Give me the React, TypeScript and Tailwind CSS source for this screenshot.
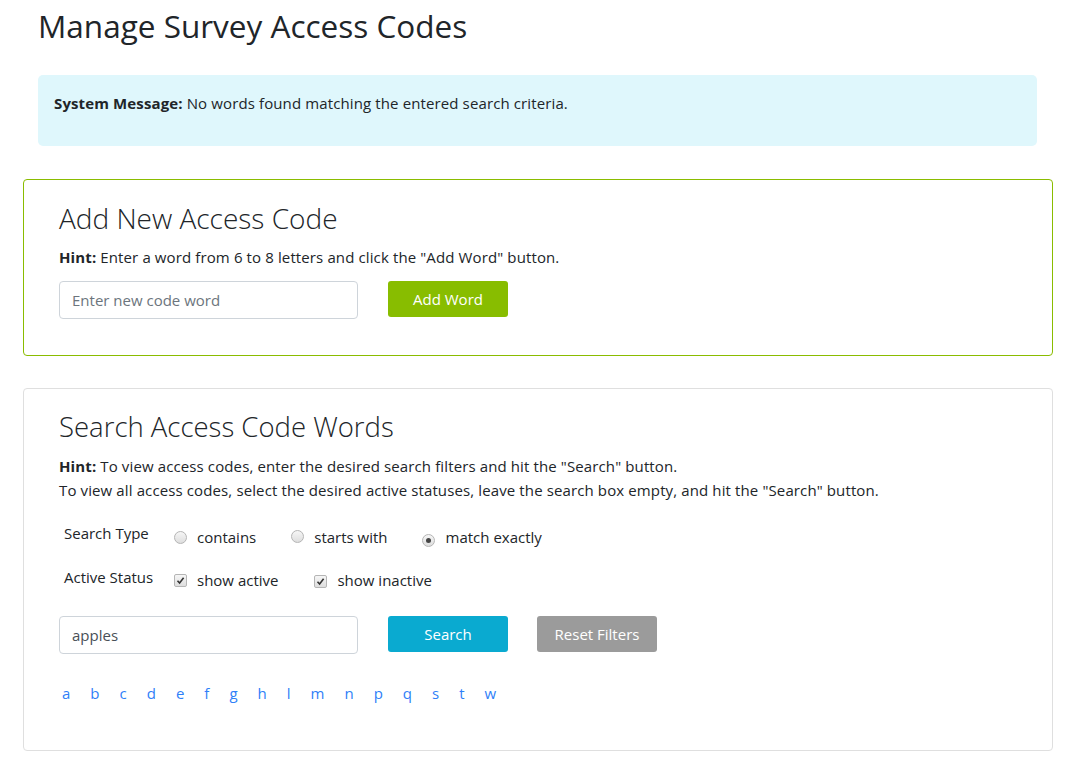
import React from "react";

function Radio({ checked }: { checked?: boolean }) {
  return (
    <span className="inline-flex items-center justify-center w-[13px] h-[13px] rounded-full border border-[#b5b5b5] bg-gradient-to-b from-[#f6f6f6] to-[#dedede]">
      {checked && <span className="w-[5px] h-[5px] rounded-full bg-[#444]" />}
    </span>
  );
}

function Check() {
  return (
    <span className="inline-flex items-center justify-center w-[13px] h-[13px] rounded-[2px] border border-[#b5b5b5] bg-gradient-to-b from-[#f6f6f6] to-[#dedede]">
      <svg width="9" height="9" viewBox="0 0 9 9">
        <path d="M1.5 4.8 L3.6 7 L7.6 1.8" fill="none" stroke="#333" strokeWidth="1.6" />
      </svg>
    </span>
  );
}

const letters = ["a", "b", "c", "d", "e", "f", "g", "h", "l", "m", "n", "p", "q", "s", "t", "w"];

export default function App() {
  return (
    <div className="w-[1076px] min-h-[768px] bg-white pl-[23px] text-[#212529] font-['Open_Sans',sans-serif] text-[15px]">
      <h1 className="ml-[15px] pt-[6px] text-[31.5px] leading-[40px] font-medium text-[#212529]">
        Manage Survey Access Codes
      </h1>
      <div className="ml-[15px] mt-[29px] w-[999px] h-[71px] bg-[#dff7fc] rounded-[5px] px-[16px] pt-[16px]">
        <p className="leading-[24px] tracking-[0.12px]">
          <b className="font-bold">System Message:</b> No words found matching the entered search criteria.
        </p>
      </div>

      <div className="mt-[33px] w-[1030px] h-[177px] border border-[#8abc00] rounded-[4px] pl-[35px] pt-[21px]">
        <h2 className="text-[28px] font-light leading-[34px]">Add New Access Code</h2>
        <p className="mt-[10px] leading-[24px] tracking-[0.12px]">
          <b className="font-bold">Hint:</b> Enter a word from 6 to 8 letters and click the "Add Word" button.
        </p>
        <div className="mt-[12px] flex items-start">
          <div className="w-[299px] h-[38px] border border-[#ced4da] rounded-[4px] flex items-center pl-[12px] text-[#6c757d]">
            Enter new code word
          </div>
          <button className="ml-[30px] w-[120px] h-[36px] bg-[#88bd00] rounded-[3px] text-white">
            Add Word
          </button>
        </div>
      </div>

      <div className="mt-[32px] w-[1030px] h-[363px] border border-[#dfdfdf] rounded-[4px] pl-[35px] pt-[21px]">
        <h2 className="text-[27.5px] font-light leading-[34px]">Search Access Code Words</h2>
        <p className="mt-[10px] leading-[24px] tracking-[0.12px]">
          <b className="font-bold">Hint:</b> To view access codes, enter the desired search filters and hit the "Search" button.
          <br />
          To view all access codes, select the desired active statuses, leave the search box empty, and hit the "Search" button.
        </p>
        <div className="mt-[19px] flex items-start">
          <div className="w-[115px] pl-[5px] leading-[24px]">Search Type</div>
          <div className="flex items-center mt-[4px] leading-[24px]">
            <Radio />
            <span className="ml-[10px]">contains</span>
            <span className="ml-[35px]"><Radio /></span>
            <span className="ml-[10px]">starts with</span>
            <span className="ml-[34px]"><Radio checked /></span>
            <span className="ml-[11px]">match exactly</span>
          </div>
        </div>
        <div className="mt-[16px] flex items-start">
          <div className="w-[115px] pl-[5px] leading-[24px]">Active Status</div>
          <div className="flex items-center mt-[3px] leading-[24px]">
            <Check />
            <span className="ml-[10px]">show active</span>
            <span className="ml-[36px]"><Check /></span>
            <span className="ml-[10px]">show inactive</span>
          </div>
        </div>
        <div className="mt-[24px] flex items-start">
          <div className="w-[299px] h-[38px] border border-[#ced4da] rounded-[4px] flex items-center pl-[12px] text-[#495057]">
            apples
          </div>
          <button className="ml-[30px] w-[120px] h-[36px] bg-[#0aaad0] rounded-[3px] text-white">
            Search
          </button>
          <button className="ml-[29px] w-[120px] h-[36px] bg-[#9b9b9b] rounded-[3px] text-white">
            Reset Filters
          </button>
        </div>
        <div className="mt-[27px] ml-[3px] flex gap-[20px] leading-[24px] text-[#2f7ff8]">
          {letters.map((l) => (
            <a key={l} className="cursor-pointer">{l}</a>
          ))}
        </div>
      </div>
    </div>
  );
}
